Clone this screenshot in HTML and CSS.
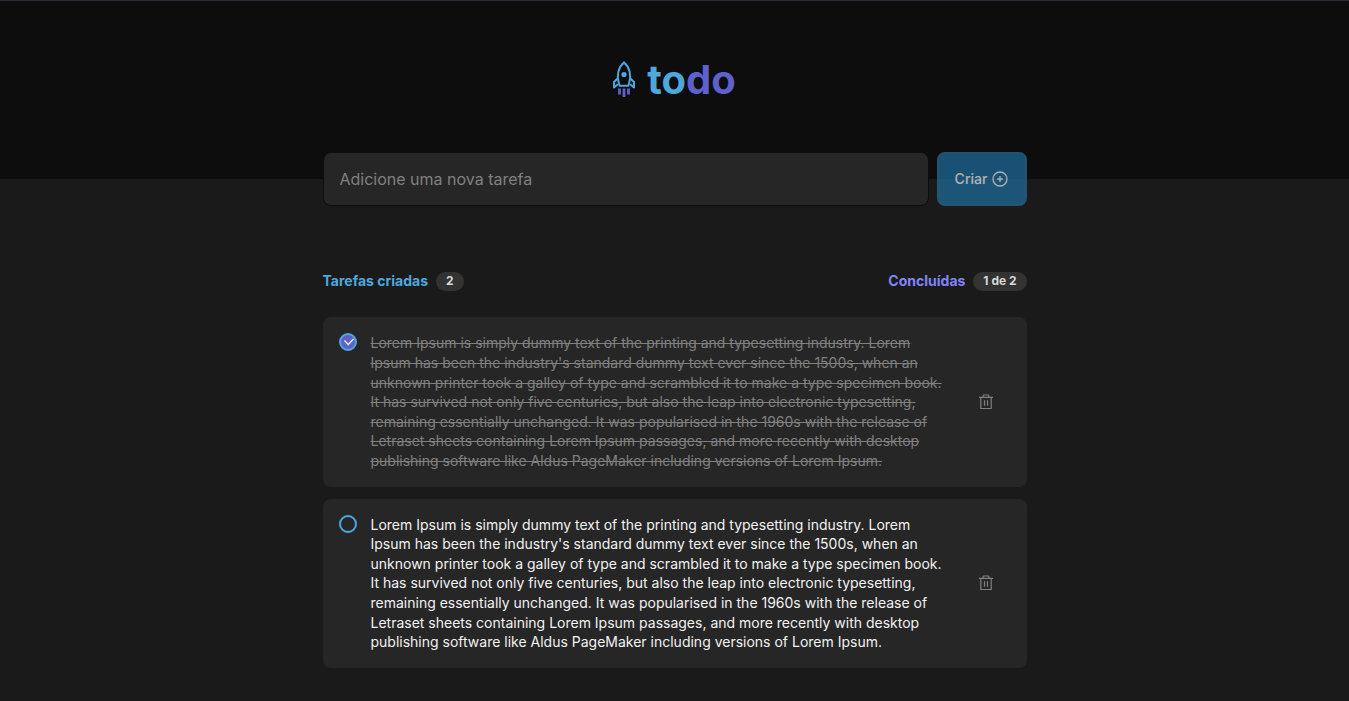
FILE: index.html
```html
<!DOCTYPE html>
<html lang="pt-BR">
<head>
<meta charset="utf-8">
<meta name="viewport" content="width=device-width, initial-scale=1">
<title>todo</title>
<link rel="stylesheet" href="styles.css">
</head>
<body>
<header class="header">
  <h1 class="logo">
    <svg class="logo-icon" viewBox="0 0 22 38" width="22" height="38" fill="none" aria-hidden="true">
      <path d="M5.800 22C3.400 14 5.400 6 11 1.400 16.600 6 18.600 14 16.200 22l-.8 2.700H6.600z" stroke="#4EA8DE" stroke-width="2" stroke-linejoin="round"/>
      <path d="M5.200 17 1 21v5.400L4.800 23.200M16.800 17 21 21v5.400L17.200 23.200" stroke="#4EA8DE" stroke-width="2" stroke-linejoin="round"/>
      <circle cx="11" cy="13.500" r="2.600" fill="#4EA8DE"/>
      <path d="M6.500 27.500v6M11 27.500v8.500M15.500 27.500v6" stroke="#5E60CE" stroke-width="2.800"/>
    </svg>
    <span class="logo-text"><span class="logo-to">to</span><span class="logo-do">do</span></span>
  </h1>
</header>
<main class="content">
  <form class="new-task">
    <input class="new-task-input" type="text" placeholder="Adicione uma nova tarefa" aria-label="Adicione uma nova tarefa">
    <button class="new-task-button" type="submit" disabled>
      Criar
      <svg viewBox="0 0 16 16" width="16" height="16" fill="none" stroke="currentColor" stroke-width="1.300" aria-hidden="true"><circle cx="8" cy="8" r="7"/><path d="M8 5v6M5 8h6"/></svg>
    </button>
  </form>
  <div class="summary">
    <p class="summary-item created">Tarefas criadas <span class="badge">2</span></p>
    <p class="summary-item done">Concluídas <span class="badge">1 de 2</span></p>
  </div>
  <ul class="tasks">
    <li class="task">
      <input class="task-check" type="checkbox" id="task-1" checked>
      <label class="task-text" for="task-1">Lorem Ipsum is simply dummy text of the printing and typesetting industry. Lorem Ipsum has been the industry's standard dummy text ever since the 1500s, when an unknown printer took a galley of type and scrambled it to make a type specimen book. It has survived not only five centuries, but also the leap into electronic typesetting, remaining essentially unchanged. It was popularised in the 1960s with the release of Letraset sheets containing Lorem Ipsum passages, and more recently with desktop publishing software like Aldus PageMaker including versions of Lorem Ipsum.</label>
      <button class="task-delete" type="button" aria-label="Excluir tarefa">
        <svg viewBox="0 0 14 16" width="14" height="16" fill="none" stroke="currentColor" stroke-width="1.200" aria-hidden="true"><path d="M0 3.400h14M1.800 3.400v11.100h10.400V3.400M4.200 3.400V1.600q0-.6.6-.6h4.400q.6 0 .6.600v1.800M5.500 6.200v5.600M8.500 6.200v5.600"/></svg>
      </button>
    </li>
    <li class="task">
      <input class="task-check" type="checkbox" id="task-2">
      <label class="task-text" for="task-2">Lorem Ipsum is simply dummy text of the printing and typesetting industry. Lorem Ipsum has been the industry's standard dummy text ever since the 1500s, when an unknown printer took a galley of type and scrambled it to make a type specimen book. It has survived not only five centuries, but also the leap into electronic typesetting, remaining essentially unchanged. It was popularised in the 1960s with the release of Letraset sheets containing Lorem Ipsum passages, and more recently with desktop publishing software like Aldus PageMaker including versions of Lorem Ipsum.</label>
      <button class="task-delete" type="button" aria-label="Excluir tarefa">
        <svg viewBox="0 0 14 16" width="14" height="16" fill="none" stroke="currentColor" stroke-width="1.200" aria-hidden="true"><path d="M0 3.400h14M1.800 3.400v11.100h10.400V3.400M4.200 3.400V1.600q0-.6.6-.6h4.400q.6 0 .6.600v1.800M5.500 6.200v5.600M8.500 6.200v5.600"/></svg>
      </button>
    </li>
  </ul>
</main>
</body>
</html>
```
FILE: styles.css
```css
* {
  box-sizing: border-box;
  margin: 0;
  padding: 0;
}

body {
  background: #1a1a1a;
  color: #f2f2f2;
  font-family: Inter, "Liberation Sans", sans-serif;
  font-size: 14px;
}

input,
button {
  font: inherit;
}

.header {
  display: flex;
  justify-content: center;
  align-items: flex-start;
  padding: 55px 16px 75px;
  background: #0d0d0d;
  border-top: 1px solid #2b2c38;
}

.logo {
  display: flex;
  align-items: center;
  gap: 12px;
  font-size: 40px;
  line-height: 48px;
}

.logo-icon {
  display: block;
}

.logo-to {
  color: #4ea8de;
}

.logo-do {
  color: #5e60ce;
}

.content {
  max-width: 736px;
  margin: -27px auto 0;
  padding: 0 16px 32px;
}

.new-task {
  display: flex;
  gap: 8px;
}

.new-task-input {
  flex: 1;
  min-width: 0;
  height: 54px;
  padding: 0 16px;
  border: 1px solid #0d0d0d;
  border-radius: 8px;
  background: #262626;
  color: #f2f2f2;
  font-size: 16px;
}

.new-task-input::placeholder {
  color: #808080;
}

.new-task-button {
  display: flex;
  align-items: center;
  justify-content: center;
  gap: 5px;
  width: 90px;
  height: 54px;
  border: 2px solid #2a7097;
  border-radius: 8px;
  background: #1e6f9f;
  color: #f2f2f2;
  font-weight: 500;
  line-height: 16px;
  opacity: 0.7;
}

.summary {
  display: flex;
  justify-content: space-between;
  margin: 66px 0 26px;
}

.summary-item {
  display: flex;
  align-items: flex-start;
  gap: 8px;
  font-weight: 700;
  line-height: 17px;
}

.created {
  color: #4ea8de;
}

.done {
  color: #8284fa;
}

.badge {
  padding: 2px 10px 3px;
  border-radius: 10px;
  background: #333;
  color: #d9d9d9;
  font-size: 12px;
  line-height: 1.2;
}

.tasks {
  display: grid;
  gap: 12px;
  list-style: none;
}

.task {
  display: flex;
  align-items: flex-start;
  padding: 16px;
  border-radius: 8px;
  background: #262626;
}

.task-check {
  flex: none;
  width: 18px;
  height: 18px;
  margin-right: 14px;
  appearance: none;
  border: 2px solid #4ea8de;
  border-radius: 50%;
}

.task-check:checked {
  background: #5e60ce url("data:image/svg+xml,%3Csvg xmlns='http://www.w3.org/2000/svg' viewBox='0 0 14 14' fill='none' stroke='%23f2f2f2' stroke-width='1.300'%3E%3Cpath d='M3.500 5.500 7.200 9.500 12.500 4'/%3E%3C/svg%3E") center / 14px 14px no-repeat;
}

.task-text {
  flex: 1;
  line-height: 1.4;
}

.task-check:checked + .task-text {
  color: #808080;
  text-decoration: line-through;
}

.task-delete {
  flex: none;
  align-self: center;
  display: grid;
  place-items: center;
  width: 50px;
  height: 32px;
  margin-left: 16px;
  border: 0;
  background: none;
  color: #808080;
}
```
